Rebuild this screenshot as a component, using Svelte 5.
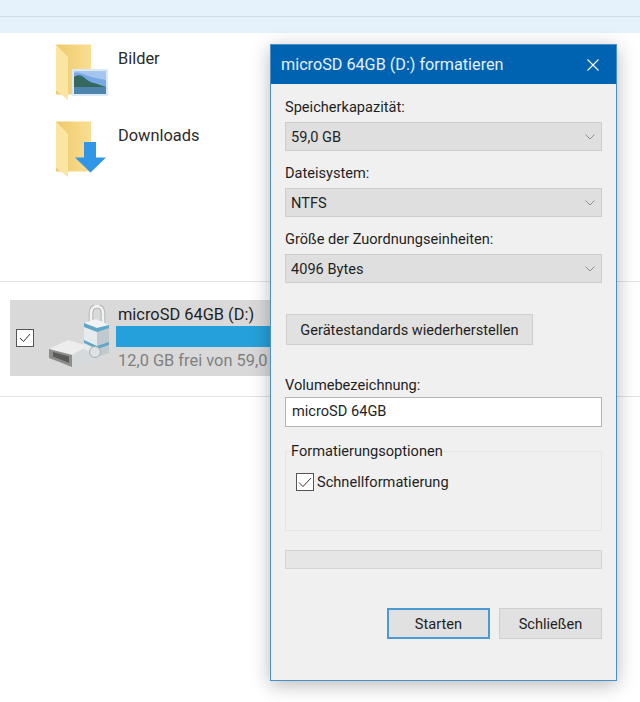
<script>
  const folders = [
    { name: 'Bilder', kind: 'picture' },
    { name: 'Downloads', kind: 'download' }
  ];
  const combos = [
    { label: 'Speicherkapazität:', value: '59,0 GB' },
    { label: 'Dateisystem:', value: 'NTFS' },
    { label: 'Größe der Zuordnungseinheiten:', value: '4096 Bytes' }
  ];
</script>

<div class="explorer">
  <div class="ribbon"><div class="ribbon-line"></div></div>

  <ul class="folders">
    {#each folders as folder}
      <li class="folder">
        <svg class="folder-icon" width="54" height="58" viewBox="0 0 54 58" aria-hidden="true">
          <defs>
            <linearGradient id="back-{folder.kind}" x1="0" y1="0" x2="1" y2="0">
              <stop offset="0" stop-color="#efc96a" />
              <stop offset="1" stop-color="#f9de92" />
            </linearGradient>
          </defs>
          <rect x="0" y="0.5" width="35" height="50" fill="url(#back-{folder.kind})" />
          <path d="M0 0.5 L12 13 V56 L0 46.5 Z" fill="#fbe5a3" />
          {#if folder.kind === 'picture'}
            <rect x="16" y="25" width="36" height="27" fill="#dbe9f5" />
            <rect x="18" y="27.5" width="32" height="22.5" fill="#79a8e6" />
            <path d="M18 27.5 H50 V36 C44 35 34 33 27 30 C23 28.5 20 28 18 29 Z" fill="#a5c5ee" />
            <path d="M18 33 C22 30 26 31 30 35 C34 39 40 39 44 41 L50 43 V50 H18 Z" fill="#35695f" />
            <path d="M18 43 H50 V50 H18 Z" fill="#4d85ad" />
          {:else}
            <path d="M28 21 H40 V36.5 H50 L34.5 51.5 L19 36.5 H28 Z" fill="#2f96e8" />
          {/if}
        </svg>
        <span>{folder.name}</span>
      </li>
    {/each}
  </ul>

  <div class="drives">
    <div class="drive">
      <span class="tick">
        <svg width="12" height="10" viewBox="0 0 12 10" aria-hidden="true"><path d="M1 5 L4.5 8.5 L11 1" fill="none" stroke="#333" stroke-width="1" /></svg>
      </span>
      <svg class="drive-icon" width="64" height="66" viewBox="0 0 64 66" aria-hidden="true">
        <path d="M43 21 V8 C43 -1 55 -1 55 8 V23" fill="none" stroke="#a9adb0" stroke-width="4.5" />
        <path d="M43 21 V8 C43 -1 55 -1 55 8 V23" fill="none" stroke="#f1f2f3" stroke-width="2.8" />
        <path d="M1 44 L20 35 L40 41 L24 50 Z" fill="#ededed" />
        <path d="M1 44 L24 50 V62 L1 53 Z" fill="#8d8d8b" />
        <path d="M5 47 L21 51.5 V58 L5 51.5 Z" fill="#5a5a58" />
        <path d="M24 50 L40 41 L56 46 V54 L24 62 Z" fill="#d6dadc" />
        <path d="M36 18 L49 23 V52 L36 44 Z" fill="#e6ebed" />
        <path d="M49 23 L61 20 V48 L49 52 Z" fill="#bfc9ce" />
        <path d="M36 18 L48 14 L61 20 L49 23 Z" fill="#f1f3f4" />
        <path d="M36 18 L49 23 L61 20 V23 L49 27 L36 22 Z" fill="#5fa6c8" />
        <path d="M36 35 L49 41 L61 37 V40 L49 44 L36 38 Z" fill="#5fa6c8" />
        <circle cx="47" cy="47" r="5.5" fill="#dfe2e3" stroke="#a8adaf" stroke-width="1" />
      </svg>
      <div class="drive-info">
        <div class="drive-name">microSD 64GB (D:)</div>
        <div class="drive-bar"></div>
        <div class="drive-free">12,0 GB frei von 59,0 GB</div>
      </div>
    </div>
  </div>

  <div class="dialog">
    <header class="titlebar">
      <span>microSD 64GB (D:) formatieren</span>
      <svg width="12" height="12" viewBox="0 0 12 12" aria-hidden="true"><path d="M0.5 0.5 L11.5 11.5 M11.5 0.5 L0.5 11.5" stroke="#fff" stroke-width="1.1" /></svg>
    </header>

    <div class="content">
      {#each combos as combo}
        <div class="field">
          <div class="label">{combo.label}</div>
          <div class="combo">
            <span>{combo.value}</span>
            <svg width="10" height="6" viewBox="0 0 10 6" aria-hidden="true"><path d="M0.5 0.5 L5 5 L9.5 0.5" fill="none" stroke="#8c8c8c" stroke-width="1" /></svg>
          </div>
        </div>
      {/each}

      <button class="btn restore">Gerätestandards wiederherstellen</button>

      <div class="label volume">Volumebezeichnung:</div>
      <div class="input">microSD 64GB</div>

      <fieldset>
        <legend>Formatierungsoptionen</legend>
        <div class="check">
          <span class="tick">
            <svg width="14" height="11" viewBox="0 0 14 11" aria-hidden="true"><path d="M1 5.5 L5 9.5 L13 1" fill="none" stroke="#333" stroke-width="1" /></svg>
          </span>
          <span>Schnellformatierung</span>
        </div>
      </fieldset>

      <div class="progress"></div>

      <div class="actions">
        <button class="btn primary">Starten</button>
        <button class="btn">Schließen</button>
      </div>
    </div>
  </div>
</div>

<style>
  :global(body) {
    margin: 0;
    background: #fff;
    overflow: hidden;
  }

  .explorer {
    position: relative;
    width: 640px;
    height: 702px;
    overflow: hidden;
    font-family: Roboto, "Noto Sans", sans-serif;
    font-size: 14.6px;
    color: #1f1f1f;
  }

  .ribbon {
    height: 33px;
    padding-top: 16px;
    box-sizing: border-box;
    background: #e5f1fb;
  }

  .ribbon-line {
    height: 1px;
    background: #cddde9;
  }

  .folders {
    list-style: none;
    margin: 0;
    padding: 10px 0 0 56px;
    height: 248px;
    box-sizing: border-box;
    font-size: 16.4px;
  }

  .folder {
    display: flex;
    gap: 8px;
    height: 77px;
    color: #2b2b2b;
    line-height: 32px;
  }

  .folder-icon {
    flex: none;
    margin-top: 1px;
  }

  .drives {
    border-top: 1px solid #e3e3e3;
    border-bottom: 1px solid #e3e3e3;
    padding: 18px 0 20px 10px;
    height: 116px;
    box-sizing: border-box;
    font-size: 16.4px;
  }

  .drive {
    display: flex;
    align-items: center;
    width: 300px;
    height: 76px;
    background: #d9d9d9;
    padding-left: 6px;
    box-sizing: border-box;
  }

  .tick {
    display: flex;
    align-items: center;
    justify-content: center;
    flex: none;
    width: 16px;
    height: 16px;
    border: 1px solid #555;
    background: #fff;
  }

  .drive-icon {
    flex: none;
    margin-left: 14px;
    margin-right: 4px;
  }

  .drive-info {
    flex: 1;
    min-width: 0;
    white-space: nowrap;
  }

  .drive-name {
    line-height: 22px;
    padding-left: 2px;
  }

  .drive-bar {
    height: 21px;
    background: #26a0da;
  }

  .drive-free {
    line-height: 22px;
    margin-top: 3px;
    padding-left: 2px;
    color: #808080;
  }

  .dialog {
    position: absolute;
    left: 270px;
    top: 44px;
    width: 347px;
    height: 637px;
    box-sizing: border-box;
    border: 1px solid #4a90c4;
    background: #f0f0f0;
    box-shadow: 0 4px 18px rgba(0, 0, 0, 0.28);
  }

  .titlebar {
    display: flex;
    align-items: center;
    justify-content: space-between;
    height: 39px;
    padding: 0 17px 0 10px;
    background: #0063b1;
    color: #e6f0f8;
    font-size: 16.2px;
  }

  .content {
    padding: 13px 14px 0;
  }

  .field {
    margin-bottom: 12px;
  }

  .label {
    line-height: 20px;
    margin-bottom: 5px;
  }

  .combo {
    display: flex;
    align-items: center;
    justify-content: space-between;
    height: 29px;
    box-sizing: border-box;
    padding: 0 6px 0 5px;
    border: 1px solid #cdcdcd;
    background: #dfdfdf;
  }

  .btn {
    height: 31px;
    box-sizing: border-box;
    padding: 0;
    border: 1px solid #cfcfcf;
    background: #e1e1e1;
    font: inherit;
    color: inherit;
  }

  .restore {
    display: block;
    width: 247px;
    margin: 31px 0 0 1px;
  }

  .volume {
    margin: 30px 0 2px;
  }

  .input {
    height: 30px;
    line-height: 27px;
    box-sizing: border-box;
    padding-left: 6px;
    border: 1px solid #b4b4b4;
    background: #fff;
  }

  fieldset {
    height: 90px;
    box-sizing: border-box;
    margin: 14px 0 0;
    padding: 12px 10px 0;
    border: 1px solid #e6e6e6;
  }

  legend {
    padding: 0;
    margin-left: -5px;
    line-height: 20px;
  }

  .check {
    display: flex;
    align-items: center;
    gap: 3px;
  }

  .progress {
    height: 19px;
    margin-top: 19px;
    box-sizing: border-box;
    border: 1px solid #d4d4d4;
    background: #e6e6e6;
  }

  .actions {
    display: flex;
    justify-content: flex-end;
    gap: 9px;
    margin-top: 39px;
  }

  .actions .btn {
    width: 103px;
  }

  .actions .primary {
    border: 2px solid #4a9ad4;
  }
</style>
